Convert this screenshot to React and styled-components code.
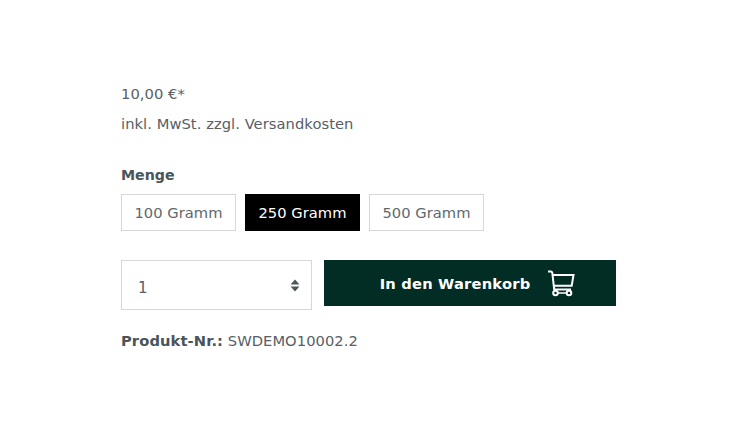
import React from "react";
import styled, { createGlobalStyle } from "styled-components";

const Global = createGlobalStyle`
  html, body { margin: 0; padding: 0; background: #fff; }
  body { font-family: "DejaVu Sans", Verdana, sans-serif; color: #566066; }
`;

const Page = styled.div`
  width: 740px;
  height: 440px;
  box-sizing: border-box;
  padding: 85px 0 0 121px;
  overflow: hidden;
`;

const Price = styled.div`
  font-size: 14.7px;
  line-height: 18px;
  height: 18px;
  letter-spacing: 0.05px;
`;

const TaxLine = styled.div`
  font-size: 14.7px;
  line-height: 18px;
  margin-top: 12px;
  letter-spacing: 0.06px;
`;

const OptionLabel = styled.div`
  font-size: 14.2px;
  font-weight: 700;
  line-height: 18px;
  margin-top: 33px;
  color: #4a545b;
`;

const OptionRow = styled.div`
  display: flex;
  gap: 9px;
  margin-top: 10px;
`;

const OptionButton = styled.div`
  box-sizing: border-box;
  width: 115px;
  height: 37px;
  display: flex;
  align-items: center;
  justify-content: center;
  font-size: 14.7px;
  letter-spacing: 0.05px;
  border: 1px solid ${(p) => (p.$active ? "#000" : "#d5d8da")};
  background: ${(p) => (p.$active ? "#000" : "#fff")};
  color: ${(p) => (p.$active ? "#fff" : "#5f676d")};
`;

const BuyRow = styled.div`
  display: flex;
  gap: 12px;
  margin-top: 29px;
  align-items: flex-start;
`;

const QuantitySelect = styled.div`
  box-sizing: border-box;
  width: 191px;
  height: 50px;
  border: 1px solid #d5d8da;
  padding: 0 11px 0 16px;
  display: flex;
  align-items: center;
  justify-content: space-between;
  font-size: 15px;
`;

const QuantityValue = styled.span`
  position: relative;
  top: 3px;
`;

const BuyButton = styled.div`
  box-sizing: border-box;
  width: 292px;
  height: 46px;
  background: #022d25;
  color: #fff;
  font-size: 14.7px;
  font-weight: 700;
  letter-spacing: 0.2px;
  display: flex;
  align-items: center;
  justify-content: center;
  gap: 17px;
  padding-left: 15px;
`;

const SkuLine = styled.div`
  font-size: 14.7px;
  line-height: 18px;
  margin-top: 22px;
  letter-spacing: 0.05px;
`;

const SkuLabel = styled.strong`
  font-weight: 700;
  color: #4a545b;
  letter-spacing: 0.1px;
`;

const SelectArrows = () => (
  <svg width="10" height="13" viewBox="0 0 10 13">
    <path d="M5 .4 9.400 5.400H.6zM5 12.600.6 7.600h8.800z" fill="#4a545b" />
  </svg>
);

const CartIcon = () => (
  <svg width="28" height="27" viewBox="0 0 28 27" fill="none" stroke="#fff" strokeWidth="2">
    <path d="M1 1.500h2.800c.8 0 1.300.5 1.500 1.200L7.200 19.500h16.800" />
    <path d="M5 5h21.500l-1.800 10.800H6.400" />
    <circle cx="8.500" cy="23" r="2.300" />
    <circle cx="22" cy="23" r="2.300" />
    <path d="M10.800 23h9" strokeWidth="1.500" />
  </svg>
);

export default function App() {
  return (
    <Page>
      <Global />
      <Price>10,00 €*</Price>
      <TaxLine>inkl. MwSt. zzgl. Versandkosten</TaxLine>
      <OptionLabel>Menge</OptionLabel>
      <OptionRow>
        <OptionButton>100 Gramm</OptionButton>
        <OptionButton $active>250 Gramm</OptionButton>
        <OptionButton>500 Gramm</OptionButton>
      </OptionRow>
      <BuyRow>
        <QuantitySelect>
          <QuantityValue>1</QuantityValue>
          <SelectArrows />
        </QuantitySelect>
        <BuyButton>
          In den Warenkorb
          <CartIcon />
        </BuyButton>
      </BuyRow>
      <SkuLine>
        <SkuLabel>Produkt-Nr.:</SkuLabel> SWDEMO10002.2
      </SkuLine>
    </Page>
  );
}
